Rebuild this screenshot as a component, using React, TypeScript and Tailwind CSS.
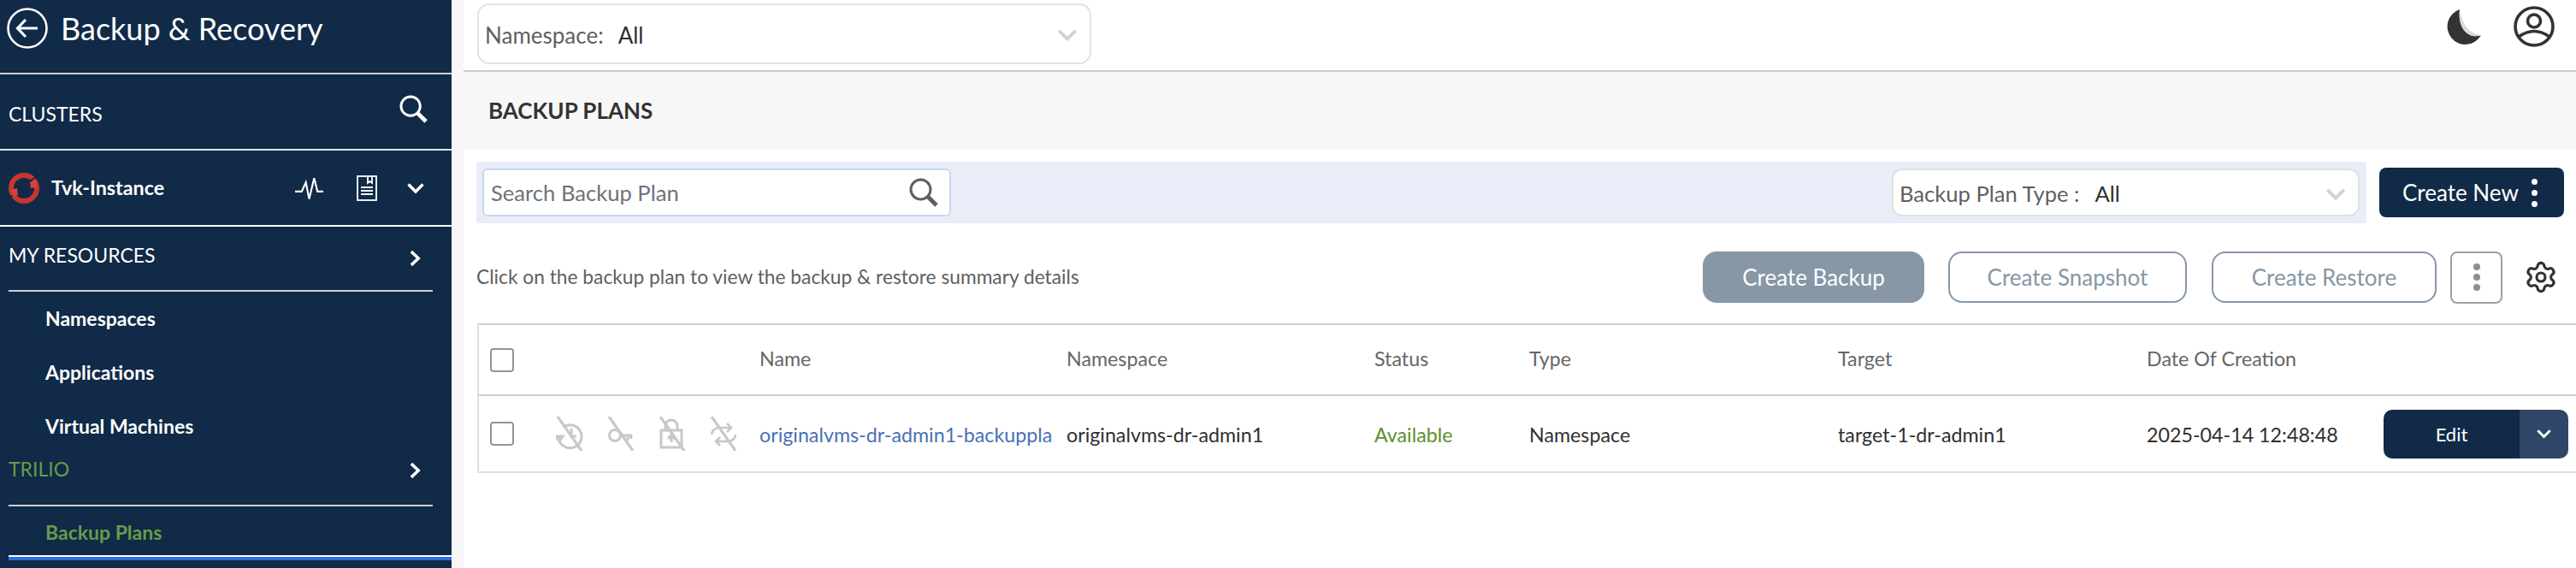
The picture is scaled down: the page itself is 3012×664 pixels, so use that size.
import React from 'react';
import { Settings } from 'lucide-react';

const Chevron = ({ className }: { className: string }) => (
  <svg viewBox="0 0 20 14" className={className} fill="none" stroke="currentColor" strokeWidth="3.4">
    <path d="M1.5 2.5 L10 11 L18.5 2.5" />
  </svg>
);

const ChevronRight = () => (
  <svg viewBox="0 0 14 20" className="w-[13px] h-[20px] text-white" fill="none" stroke="currentColor" strokeWidth="3.8">
    <path d="M2 1.5 L11 10 L2 18.5" />
  </svg>
);

const Search = ({ className }: { className: string }) => (
  <svg viewBox="0 0 36 36" className={className} fill="none" stroke="currentColor">
    <circle cx="14.5" cy="14.5" r="11.5" strokeWidth="3" />
    <path d="M23 23 L33 33" strokeWidth="5" />
  </svg>
);

const Slash = () => <path d="M2 0 L30 40" stroke="#c8c8c8" strokeWidth="3.2" fill="none" />;

const DisabledIcons = () => (
  <div className="flex gap-[28px] ml-[49px]">
    <svg viewBox="0 0 32 40" className="w-[32px] h-[40px]" fill="none" stroke="#c8c8c8" strokeWidth="3">
      <path d="M3 24 A13.5 13.5 0 1 0 9 12" />
      <path d="M0 23 L8 23 L4 29 Z" fill="#c8c8c8" />
      <path d="M18 14 L18 23 L24 23" />
      <Slash />
    </svg>
    <svg viewBox="0 0 32 40" className="w-[32px] h-[40px]" fill="none" stroke="#c8c8c8" strokeWidth="3">
      <circle cx="9" cy="22" r="6.5" />
      <path d="M15 22 L29 22 M24 22 L24 28 M28 22 L28 26" />
      <Slash />
    </svg>
    <svg viewBox="0 0 32 40" className="w-[32px] h-[40px]" fill="none" stroke="#c8c8c8" strokeWidth="3">
      <rect x="3" y="16" width="24" height="20" />
      <path d="M8 16 L8 11 A7 7 0 0 1 22 11 L22 16" />
      <path d="M15 30 L15 23 M11 26 L15 21 L19 26" />
      <Slash />
    </svg>
    <svg viewBox="0 0 32 40" className="w-[32px] h-[40px]" fill="none" stroke="#c8c8c8" strokeWidth="2.6">
      <path d="M2 21 Q3 14 10 13 L25 13 M20 8 L25 13 L20 18" />
      <path d="M30 21 Q29 28 22 29 L7 29 M12 24 L7 29 L12 34" />
      <Slash />
    </svg>
  </div>
);

const Box = () => <div className="w-[28px] h-[28px] rounded-[4px] border-2 border-[#8f93a3] bg-white" />;

const Divider = ({ inset, color }: { inset?: boolean; color: string }) => (
  <div className={`h-[2px] shrink-0 ${inset ? 'ml-[10px] mr-[22px]' : ''} ${color}`} />
);

const SubItem = ({ label, height, green }: { label: string; height: string; green?: boolean }) => (
  <div className={`flex items-center pl-[53px] shrink-0 text-[23px] font-bold ${height} ${green ? 'text-[#6b9a4a] pt-[4px]' : 'text-white'}`}>
    {label}
  </div>
);

const Sidebar = () => (
  <aside className="w-[528px] shrink-0 bg-[#102a47] flex flex-col overflow-hidden">
    <div className="h-[85px] shrink-0 flex items-start pl-[8px] pt-[9px] gap-[15px] text-white">
      <svg viewBox="0 0 48 48" className="w-[48px] h-[48px] shrink-0" fill="none" stroke="currentColor">
        <circle cx="24" cy="24" r="22.5" strokeWidth="2.6" />
        <path d="M36 24 L13 24 M22 14 L12.5 24 L22 34" strokeWidth="3.2" />
      </svg>
      <span className="text-[36px] leading-[48px]">Backup &amp; Recovery</span>
    </div>
    <Divider color="bg-[#d0d0d0]" />
    <div className="h-[87px] shrink-0 flex items-center justify-between pl-[10px] pr-[27px] text-white">
      <span className="text-[23px] mt-[5px]">CLUSTERS</span>
      <Search className="w-[35px] h-[35px] mb-[6px]" />
    </div>
    <Divider color="bg-[#e6e6e6]" />
    <div className="h-[87px] shrink-0 flex items-center pl-[10px] pr-[32px] text-white">
      <svg viewBox="0 0 36 36" className="w-[36px] h-[36px] shrink-0" fill="none">
        <circle cx="18" cy="18" r="15" stroke="#c9352f" strokeWidth="6" />
        <path d="M22 11 L34 4" stroke="#102a47" strokeWidth="2" />
        <path d="M2 28 L14 23" stroke="#102a47" strokeWidth="2" />
        <path d="M25 11 L32 9 L33 17 L26 18 Z M3 20 L10 18 L11 26 L5 28 Z" fill="#d8433c" />
      </svg>
      <span className="ml-[14px] text-[23.3px] font-bold">Tvk-Instance</span>
      <svg viewBox="0 0 34 28" className="w-[33px] h-[28px] ml-auto" fill="none" stroke="currentColor" strokeWidth="2.2">
        <path d="M0 18 L8 18 L13 7 L17 27 L23 2 L27 18 L34 18" />
      </svg>
      <svg viewBox="0 0 24 30" className="w-[24px] h-[30px] ml-[39px]" fill="none" stroke="currentColor" strokeWidth="1.8">
        <rect x="1" y="1" width="22" height="28" />
        <path d="M13 1 L13 9 L15.5 7 L18 9 L18 1 M5 14 L19 14 M5 18 L19 18 M5 22 L19 22" />
      </svg>
      <Chevron className="w-[20px] h-[14px] ml-[35px]" />
    </div>
    <Divider color="bg-white" />
    <div className="h-[74px] shrink-0 flex items-center justify-between pl-[10px] pr-[36px] text-white">
      <span className="text-[23px] mb-[8px]">MY RESOURCES</span>
      <ChevronRight />
    </div>
    <Divider inset color="bg-[#d0d0d0]" />
    <SubItem label="Namespaces" height="h-[62px]" />
    <SubItem label="Applications" height="h-[64px]" />
    <SubItem label="Virtual Machines" height="h-[62px]" />
    <div className="h-[61px] shrink-0 flex items-center justify-between pl-[10px] pr-[36px] pb-[20px]">
      <span className="text-[23px] text-[#6b9a4a] mb-[3px]">TRILIO</span>
      <ChevronRight />
    </div>
    <Divider inset color="bg-[#d0d0d0]" />
    <SubItem label="Backup Plans" height="h-[57px]" green />
    <div className="ml-[10px] h-[2px] shrink-0 bg-white" />
    <div className="ml-[10px] h-[4px] shrink-0 bg-[#2f6de0]" />
  </aside>
);

const SelectBox = ({ label, width, gap }: { label: string; width: string; gap: string }) => (
  <div className={`h-[56px] rounded-[12px] border-2 border-[#e0e0e0] bg-white flex items-center pl-[7px] pr-[14px] ${width}`}>
    <span className="text-[25.6px] text-[#5f5f5f] pt-[3px]">{label}</span>
    <span className={`text-[25.6px] text-[#2f2f2f] pt-[3px] ${gap}`}>All</span>
    <Chevron className="w-[24px] h-[16px] ml-auto mt-[3px] text-[#d2d2d2]" />
  </div>
);

const Outline = ({ label, width, mr }: { label: string; width: string; mr: string }) => (
  <div className={`h-[60px] rounded-[16px] border-2 border-[#8596a6] bg-white flex items-center justify-center text-[26px] text-[#8596a6] ${width} ${mr}`}>
    {label}
  </div>
);

const columns = 'grid grid-cols-[328px_359px_360px_181px_361px_361px_277px_225px] items-center';

const App = () => (
  <div className="w-[3012px] h-[664px] flex overflow-hidden bg-[#f7f7f7] font-[Lato,sans-serif]">
    <Sidebar />
    <div className="w-[14px] shrink-0" />
    <main className="w-[2470px] shrink-0 bg-white flex flex-col">
      <div className="h-[82px] shrink-0 flex items-start pl-[16px] pt-[4px]">
        <div className="w-[718px] h-[71px] rounded-[14px] border-2 border-[#e2e2e2] flex items-center pl-[7px] pr-[14px]">
          <span className="text-[26px] text-[#5f5f5f] pt-[3px]">Namespace:</span>
          <span className="text-[26px] text-[#2f2f2f] ml-[17px] pt-[3px]">All</span>
          <Chevron className="w-[24px] h-[16px] ml-auto mt-[3px] text-[#d2d2d2]" />
        </div>
        <svg viewBox="0 0 42 42" className="w-[42px] h-[42px] ml-[1583px] mt-[6px]">
          <path d="M17 1 A21 21 0 1 0 42 31 C30 36 14 26 17 1 Z" fill="#333" />
          <path d="M17 1 C14 26 30 36 42 31 C32 31 20 22 17 1 Z" fill="#d8d8d8" />
        </svg>
        <svg viewBox="0 0 48 48" className="w-[48px] h-[48px] ml-[38px] mt-[3px]" fill="none" stroke="#333" strokeWidth="3.6">
          <circle cx="24" cy="24" r="22" />
          <circle cx="24" cy="17.5" r="7.5" />
          <path d="M6 36 Q24 23 42 36" />
        </svg>
      </div>
      <div className="h-[2px] shrink-0 bg-[#cccccc]" />
      <div className="h-[91px] shrink-0 bg-[#f7f7f7] flex items-center pl-[29px] text-[26px] font-bold text-[#333]">BACKUP PLANS</div>
      <div className="flex mt-[14px] ml-[15px] shrink-0">
        <div className="w-[2210px] h-[72px] bg-[#e8edf7] rounded-[3px] flex items-center justify-between pl-[7px] pr-[8px]">
          <div className="w-[548px] h-[56px] rounded-[6px] border-2 border-[#c9d6ec] bg-white flex items-center justify-between pl-[8px] pr-[12px]">
            <span className="text-[25.6px] text-[#6d7378]">Search Backup Plan</span>
            <Search className="w-[36px] h-[36px] text-[#5f5f5f]" />
          </div>
          <SelectBox label="Backup Plan Type :" width="w-[547px]" gap="ml-[18px]" />
        </div>
        <div className="w-[216px] h-[58px] rounded-[8px] bg-[#102a47] ml-[15px] mt-[7px] flex items-center pl-[27px] text-white text-[26px]">
          Create New
          <span className="ml-[15px] flex flex-col gap-[6px]">
            <i className="w-[7px] h-[7px] rounded-full bg-white" />
            <i className="w-[7px] h-[7px] rounded-full bg-white" />
            <i className="w-[7px] h-[7px] rounded-full bg-white" />
          </span>
        </div>
      </div>
      <div className="flex items-center h-[60px] mt-[33px] pl-[15px] shrink-0">
        <span className="text-[22.75px] text-[#5f5f5f]">Click on the backup plan to view the backup &amp; restore summary details</span>
        <div className="ml-auto flex items-center pr-[21px]">
          <div className="w-[259px] h-[60px] rounded-[16px] bg-[#8797a6] mr-[28px] flex items-center justify-center text-white text-[26px]">Create Backup</div>
          <Outline label="Create Snapshot" width="w-[279px]" mr="mr-[29px]" />
          <Outline label="Create Restore" width="w-[263px]" mr="mr-[16px]" />
          <div className="w-[61px] h-[61px] rounded-[8px] border-2 border-[#a0a0a0] flex flex-col items-center justify-center gap-[4px]">
            <i className="w-[8px] h-[8px] rounded-full bg-[#8f8f8f]" />
            <i className="w-[8px] h-[8px] rounded-full bg-[#8f8f8f]" />
            <i className="w-[8px] h-[8px] rounded-full bg-[#8f8f8f]" />
          </div>
          <Settings className="w-[40px] h-[40px] ml-[25px] text-[#333]" strokeWidth={1.9} />
        </div>
      </div>
      <div className="mt-[24px] ml-[16px] shrink-0 border-l-2 border-[#e0e0e0]">
        <div className={`${columns} h-[85px] border-t-2 border-b-2 border-[#cccccc] text-[23.25px] text-[#666]`}>
          <div className="pl-[13px]"><Box /></div>
          <div className="mb-[2px]">Name</div>
          <div className="mb-[2px]">Namespace</div>
          <div className="mb-[2px]">Status</div>
          <div className="mb-[2px]">Type</div>
          <div className="mb-[2px]">Target</div>
          <div className="mb-[2px]">Date Of Creation</div>
          <div />
        </div>
        <div className={`${columns} h-[90px] border-b-2 border-[#e0e0e0] text-[23.25px] text-[#2f2f2f]`}>
          <div className="pl-[13px] flex items-center"><Box /><DisabledIcons /></div>
          <div className="text-[#4a70b5] whitespace-nowrap pt-[3px]">originalvms-dr-admin1-backuppla</div>
          <div className="pt-[3px]">originalvms-dr-admin1</div>
          <div className="text-[#5d8f2e] pt-[3px]">Available</div>
          <div className="pt-[3px]">Namespace</div>
          <div className="pt-[3px]">target-1-dr-admin1</div>
          <div className="pt-[3px]">2025-04-14 12:48:48</div>
          <div className="flex w-[216px] h-[57px] rounded-[10px] overflow-hidden text-white text-[22px]">
            <div className="w-[159px] bg-[#102a47] flex items-center justify-center">Edit</div>
            <div className="flex-1 bg-[#2f4668] flex items-center justify-center"><Chevron className="w-[17px] h-[12px]" /></div>
          </div>
        </div>
      </div>
    </main>
  </div>
);

export default App;
